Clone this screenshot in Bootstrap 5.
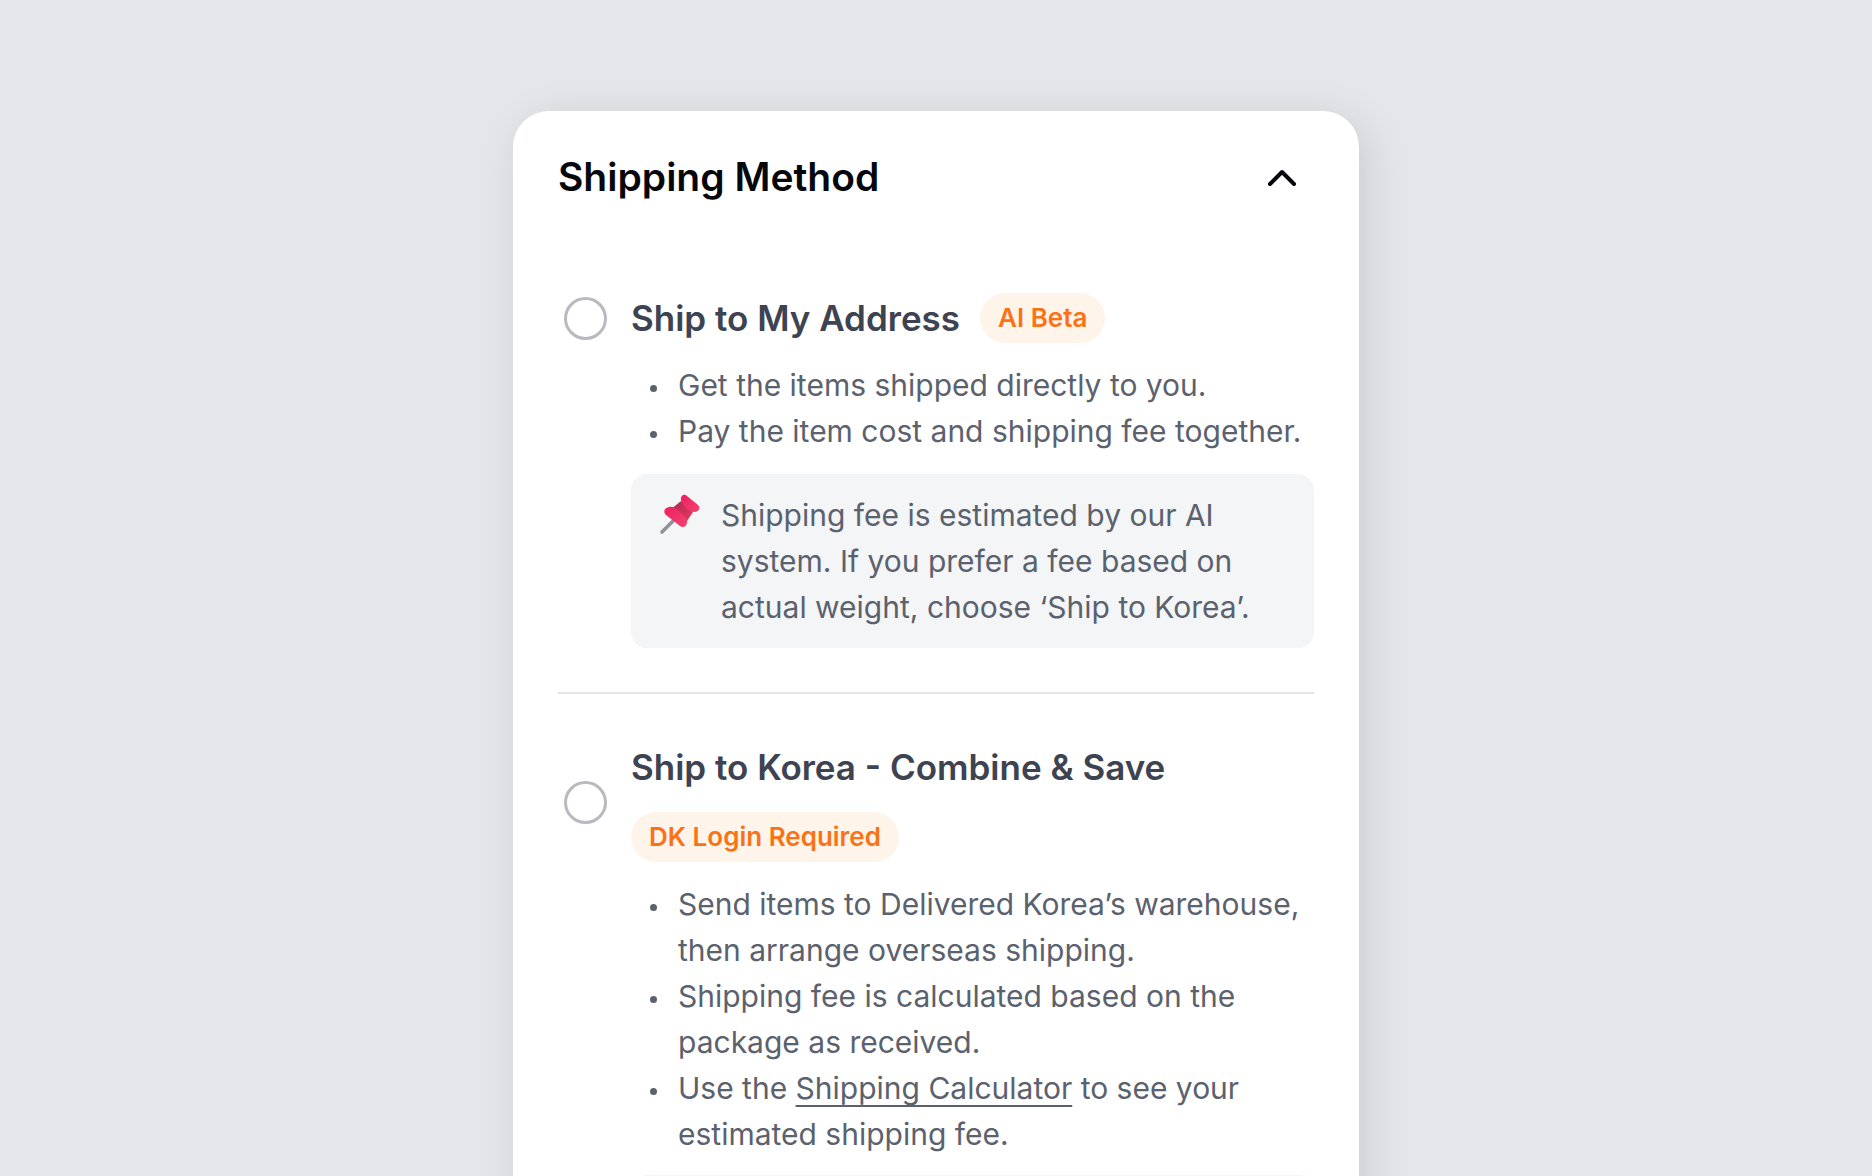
<!DOCTYPE html>
<html lang="en">
<head>
<meta charset="utf-8">
<meta name="viewport" content="width=device-width, initial-scale=1">
<title>Shipping Method</title>
<link href="https://cdn.jsdelivr.net/npm/bootstrap@5.3.0/dist/css/bootstrap.min.css" rel="stylesheet">
<style>
  body { background: #e5e6ea; font-family: Inter, "Open Sans", sans-serif; color: #5b616d; font-size: 30px; line-height: 46px; }
  .ship-page { padding-top: 111px; }
  .ship-card { width: 100%; max-width: 846px; min-height: 100vh; padding: 41px 45px; border-radius: 36px; box-shadow: 8px 8px 40px rgba(34, 36, 34, .13); }
  .ship-title { font-size: 39px; line-height: 50px; font-weight: 600; color: #06070c; }
  .ship-toggle { width: 64px; height: 50px; }
  .ship-head { margin-bottom: 91px; }
  .ship-option { padding-left: 6px; gap: 24px; }
  .ship-radio.form-check-input { width: 43px; height: 43px; border: 3px solid #b8bac0; margin: 0; }
  .ship-name { font-size: 35px; line-height: 50px; font-weight: 600; color: #3d4351; }
  .ship-names { column-gap: 20px; row-gap: 20px; }
  .ship-tag { font-size: 26px; line-height: 50px; font-weight: 600; color: #f97316; background: #fff4ea; padding: 0 18px; }
  .ship-body { padding-left: 73px; }
  .ship-points { margin: 19px 0 0; padding-left: 47px; }
  .ship-points li { position: relative; }
  .ship-points li::before { content: ""; position: absolute; left: -28px; top: 23px; width: 7px; height: 7px; border-radius: 50%; background: #5b616d; }
  .ship-points a { color: inherit; text-decoration-thickness: 2px; text-underline-offset: 6px; }
  .ship-note { margin-top: 20px; padding: 18px 28px; gap: 20px; border-radius: 16px; background: #f3f5f7; }
  .ship-tip { margin-top: 18px; height: 174px; border-radius: 16px; background: #e9f9f4; }
  .ship-rule { margin: 44px 0 48px; border-top: 2px solid #e3e6e8; opacity: 1; }
</style>
</head>
<body class="vh-100 overflow-hidden">
<main class="ship-page d-flex justify-content-center">
  <section class="ship-card bg-white">
    <header class="ship-head d-flex justify-content-between align-items-center">
      <h1 class="ship-title m-0">Shipping Method</h1>
      <button type="button" class="ship-toggle btn p-0 border-0 d-flex align-items-center justify-content-center" aria-label="Collapse" aria-expanded="true">
        <svg width="32" height="20" viewBox="0 0 32 20" fill="none" stroke="#06070c" stroke-width="4" stroke-linecap="round" stroke-linejoin="round" aria-hidden="true"><path d="M4 17 16 5l12 12"/></svg>
      </button>
    </header>

    <article>
      <div class="ship-option d-flex align-items-center">
        <input class="ship-radio form-check-input flex-shrink-0" type="radio" name="method" id="address">
        <label class="ship-names d-flex flex-wrap align-items-center" for="address">
          <span class="ship-name">Ship to My Address</span>
          <span class="ship-tag rounded-pill">AI Beta</span>
        </label>
      </div>
      <div class="ship-body">
        <ul class="ship-points list-unstyled">
          <li>Get the items shipped directly to you.</li>
          <li>Pay the item cost and shipping fee together.</li>
        </ul>
        <div class="ship-note d-flex align-items-start">
          <svg class="flex-shrink-0" width="42" height="46" viewBox="0 0 42 46" aria-hidden="true">
            <defs>
              <linearGradient id="cap" x1="0" y1="0" x2="1" y2="1"><stop offset="0" stop-color="#ee1f62"/><stop offset="1" stop-color="#f0446f"/></linearGradient>
              <linearGradient id="neck" x1="0" y1="0" x2="1" y2="1"><stop offset="0" stop-color="#a82e4c"/><stop offset=".5" stop-color="#cf2f59"/><stop offset="1" stop-color="#e93a66"/></linearGradient>
            </defs>
            <path d="M15 28 3 40" stroke="#93909b" stroke-width="3.6" stroke-linecap="round"/>
            <path d="M22 9 34 20 26 32 11 18Z" fill="url(#neck)"/>
            <path d="M28 4C25 1 21 4 22 8c1 5 8 12 13 12 5 0 7-4 4-7Z" fill="url(#cap)"/>
            <path d="M10 15c-5 1-6 5-3 8l14 11c3 2 6 1 7-3 1-4-2-7-6-10-4-4-7-7-12-6Z" fill="url(#cap)"/>
          </svg>
          <p class="m-0">Shipping fee is estimated by our AI system. If you prefer a fee based on actual weight, choose ‘Ship to Korea’.</p>
        </div>
      </div>
    </article>

    <hr class="ship-rule">

    <article>
      <div class="ship-option d-flex align-items-center">
        <input class="ship-radio form-check-input flex-shrink-0" type="radio" name="method" id="korea">
        <label class="ship-names d-flex flex-column align-items-start" for="korea">
          <span class="ship-name">Ship to Korea - Combine &amp; Save</span>
          <span class="ship-tag rounded-pill">DK Login Required</span>
        </label>
      </div>
      <div class="ship-body">
        <ul class="ship-points list-unstyled">
          <li>Send items to Delivered Korea’s warehouse, then arrange overseas shipping.</li>
          <li>Shipping fee is calculated based on the package as received.</li>
          <li>Use the <a href="#">Shipping Calculator</a> to see your estimated shipping fee.</li>
        </ul>
        <div class="ship-tip"></div>
      </div>
    </article>
  </section>
</main>
<script src="https://cdn.jsdelivr.net/npm/bootstrap@5.3.0/dist/js/bootstrap.bundle.min.js"></script>
</body>
</html>
